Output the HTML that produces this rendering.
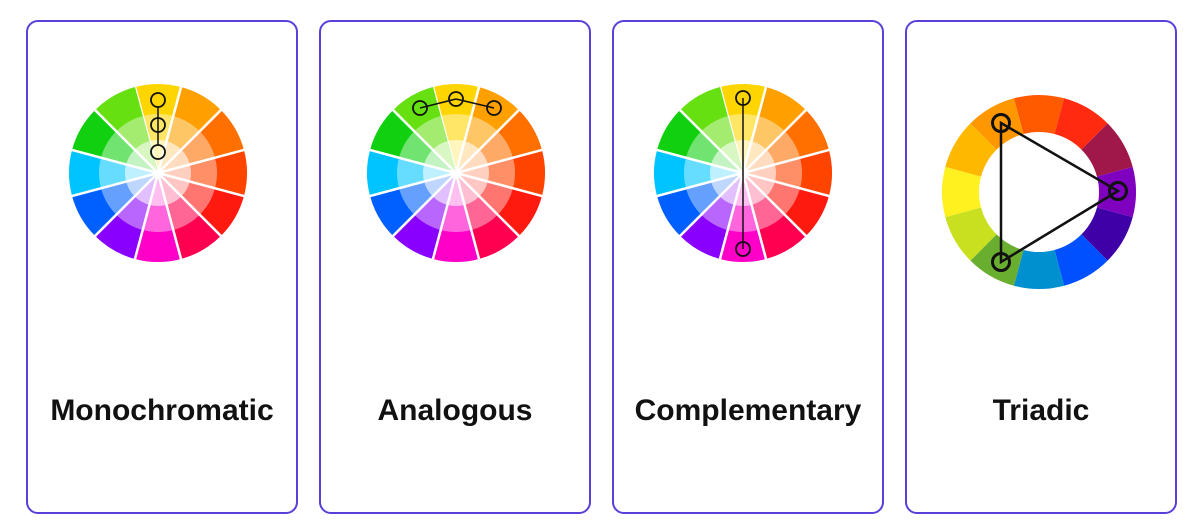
<!DOCTYPE html>
<html><head><style>
body{margin:0;width:1188px;height:525px;background:#fff;position:relative;overflow:hidden;font-family:"Liberation Sans",sans-serif}
.card{position:absolute;top:20px;width:272px;height:494px;border:2px solid #5a3fd8;border-radius:12px;box-sizing:border-box}
.lbl{position:absolute;top:372px;left:-10px;right:-10px;text-align:center;font-weight:bold;font-size:30px;color:#111}
svg{position:absolute;left:0;top:0}
</style></head><body>
<div class="card" style="left:26px"><div class="lbl">Monochromatic</div></div>
<div class="card" style="left:319px"><div class="lbl">Analogous</div></div>
<div class="card" style="left:612px"><div class="lbl">Complementary</div></div>
<div class="card" style="left:905px"><div class="lbl">Triadic</div></div>
<svg id="s" width="1188" height="525"></svg>
<script>
var s=document.getElementById('s'),h='';
function pt(cx,cy,r,a){a=a*Math.PI/180;return [cx+r*Math.sin(a),cy-r*Math.cos(a)];}
function seg(cx,cy,r0,r1,a0,a1,c){var p=pt(cx,cy,r1,a0),q=pt(cx,cy,r1,a1),u=pt(cx,cy,r0,a1),v=pt(cx,cy,r0,a0);
return '<path d="M'+v+'L'+p+'A'+r1+' '+r1+' 0 0 1 '+q+'L'+u+(r0>0?'A'+r0+' '+r0+' 0 0 0 '+v:'')+'Z" fill="'+c+'"/>';}
function mix(c,t){var n=parseInt(c.slice(1),16),r=n>>16,g=(n>>8)&255,b=n&255;
return 'rgb('+Math.round(r+(255-r)*t)+','+Math.round(g+(255-g)*t)+','+Math.round(b+(255-b)*t)+')';}
var C=['#ffd500','#ffa000','#ff7000','#ff4400','#ff1a10','#ff0050','#ff00c8','#8a00ff','#0060ff','#00c4ff','#10d010','#66e010'];
function wheel(cx,cy){
for(var i=0;i<12;i++){var a0=i*30-15,a1=a0+30;
h+=seg(cx,cy,0,89,a0,a1,C[i]);h+=seg(cx,cy,0,59,a0,a1,mix(C[i],0.4));h+=seg(cx,cy,0,33,a0,a1,mix(C[i],0.75));
var p=pt(cx,cy,92,a0);h+='<line x1="'+cx+'" y1="'+cy+'" x2="'+p[0]+'" y2="'+p[1]+'" stroke="#fff" stroke-width="2.5"/>';}}
function circ(x,y){h+='<circle cx="'+x+'" cy="'+y+'" r="7" fill="none" stroke="#111" stroke-width="1.8"/>';}
function ln(a,b,c,d,w){h+='<line x1="'+a+'" y1="'+b+'" x2="'+c+'" y2="'+d+'" stroke="#111" stroke-width="'+w+'"/>';}
wheel(158,173);ln(158,107,158,145,1.5);circ(158,100);circ(158,125);circ(158,152);
wheel(456,173);ln(420,108,456,99,1.5);ln(456,99,494,108,1.5);circ(420,108);circ(456,99);circ(494,108);
wheel(743,173);ln(743,98,743,249,1.5);circ(743,98);circ(743,249);
var T=['#ff5a00','#ff2a10','#a0184a','#8000c0','#4000a8','#0050ff','#0090d0','#6aae30','#c8e020','#fff020','#ffb800','#ff9800'];
for(var i=0;i<12;i++)h+=seg(1039,192,60,97,i*30-15,i*30+15,T[i]);
h+='<polygon points="1001,123 1118,191 1001,262" fill="none" stroke="#111" stroke-width="2.5"/>';
[[1001,123],[1118,191],[1001,262]].forEach(function(p){h+='<circle cx="'+p[0]+'" cy="'+p[1]+'" r="8.5" fill="none" stroke="#111" stroke-width="3"/>';});
s.innerHTML=h;
</script>
</body></html>
